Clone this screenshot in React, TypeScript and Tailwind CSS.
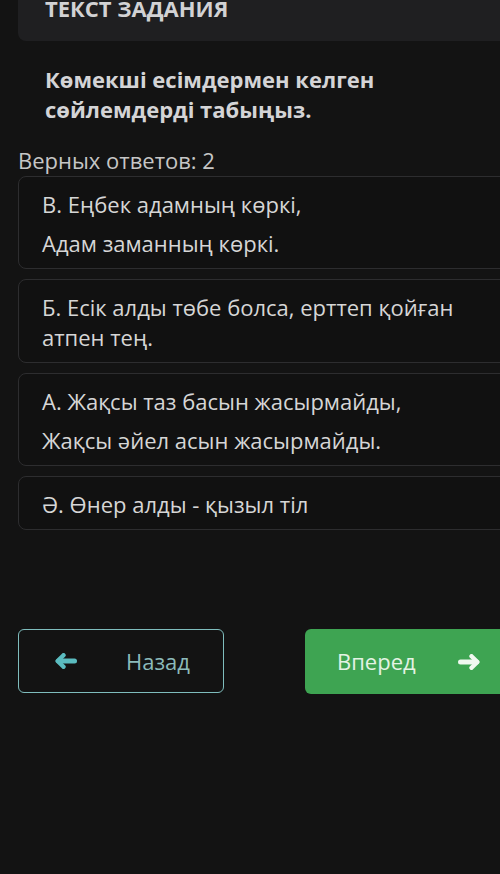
const ANSWERS: string[][] = [
  ["В. Еңбек адамның көркі,", "Адам заманның көркі."],
  ["Б. Есік алды төбе болса, ерттеп қойған атпен тең."],
  ["А. Жақсы таз басын жасырмайды,", "Жақсы әйел асын жасырмайды."],
  ["Ә. Өнер алды - қызыл тіл"],
];

// thick arrow, head and shaft drawn as rounded strokes
function Arrow({ className, dir }: { className?: string; dir: "left" | "right" }) {
  return (
    <svg
      viewBox="0 0 22 16"
      className={className}
      fill="none"
      stroke="currentColor"
      strokeLinecap="round"
      strokeLinejoin="round"
      style={dir === "right" ? { transform: "scaleX(-1)" } : undefined}
    >
      <path d="M8.5 2.2 L2.6 8 L8.5 13.8" strokeWidth="4.4" />
      <path d="M3.5 8 H19.5" strokeWidth="5" />
    </svg>
  );
}

export default function App() {
  return (
    <div className="w-[500px] h-[874px] overflow-hidden bg-[#131313] font-['Open_Sans',sans-serif]">
      <div className="w-[560px]">
        {/* Task header */}
        <div className="ml-[18px] h-[41px] bg-[#1f1f21] rounded-bl-lg pl-[27px] overflow-hidden">
          <div className="-mt-[4px] text-[22px] leading-[24px] font-bold text-[#d2d2d4]">
            ТЕКСТ ЗАДАНИЯ
          </div>
        </div>

        {/* Question */}
        <div className="ml-[45px] mt-[23px] w-[420px] text-[22px] leading-[30px] font-bold text-[#d4d4d6]">
          Көмекші есімдермен келген сөйлемдерді табыңыз.
        </div>

        <div className="ml-[18px] mt-[24px] text-[22px] leading-[24px] text-[#c6c6c6]">
          Верных ответов: 2
        </div>

        {/* Answers */}
        <div className="ml-[18px] mt-[4px] flex flex-col gap-[10px]">
          {ANSWERS.map((lines, i) => (
            <div
              key={i}
              className="w-[530px] rounded-lg border border-[#2d2d2f] bg-[#111111] pl-[23px] pt-[12px] pb-[10px]"
            >
              <div className="w-[440px] flex flex-col gap-[9px] text-[22px] leading-[30px] text-[#d6d6d6]">
                {lines.map((l) => (
                  <p key={l}>{l}</p>
                ))}
              </div>
            </div>
          ))}
        </div>

        {/* Navigation */}
        <div className="mt-[99px] flex items-stretch">
          <button className="ml-[18px] w-[206px] h-[64px] rounded-md border border-[#7fbdbd] flex items-center pl-[36px]">
            <Arrow dir="left" className="w-[22px] h-[16px] text-[#5bbcc0]" />
            <span className="ml-[49px] text-[22px] text-[#8cbaba]">Назад</span>
          </button>
          <button className="ml-[81px] w-[220px] h-[65px] rounded-md bg-[#3ea452] flex items-center pl-[32px]">
            <span className="text-[22px] text-[#e4f3e4]">Вперед</span>
            <Arrow dir="right" className="ml-[42px] w-[22px] h-[16px] text-[#f0f8f0]" />
          </button>
        </div>
      </div>
    </div>
  );
}
